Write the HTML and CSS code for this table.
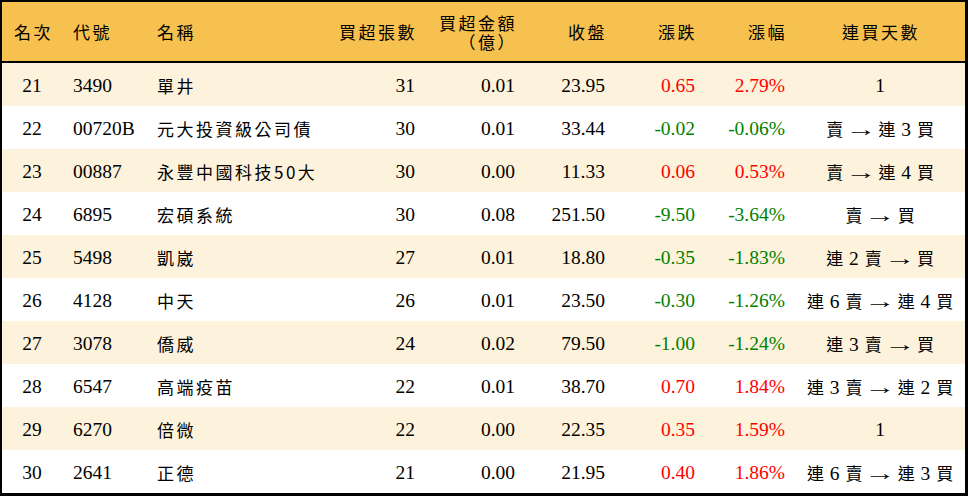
FILE: index.html
```html
<!DOCTYPE html>
<html lang="zh-Hant">
<head>
<meta charset="utf-8">
<title>買超排行</title>
<link rel="stylesheet" href="styles.css">
</head>
<body>
<div class="frame">
<table class="rank">
<colgroup>
<col class="w-rank"><col class="w-code"><col class="w-name"><col class="w-qty"><col class="w-amt"><col class="w-close"><col class="w-chg"><col class="w-pct"><col class="w-streak">
</colgroup>
<thead>
<tr>
<th class="c-rank">名次</th>
<th class="c-code">代號</th>
<th class="c-name">名稱</th>
<th class="c-num">買超張數</th>
<th class="c-num two"><span class="ln">買超金額</span><span class="ln">（億）</span></th>
<th class="c-num">收盤</th>
<th class="c-num">漲跌</th>
<th class="c-num">漲幅</th>
<th class="c-streak">連買天數</th>
</tr>
</thead>
<tbody>
<tr class="alt"><td class="c-rank">21</td><td class="c-code">3490</td><td class="c-name">單井</td><td class="c-num">31</td><td class="c-num">0.01</td><td class="c-num">23.95</td><td class="c-num up">0.65</td><td class="c-num up">2.79%</td><td class="c-streak">1</td></tr>
<tr><td class="c-rank">22</td><td class="c-code">00720B</td><td class="c-name">元大投資級公司債</td><td class="c-num">30</td><td class="c-num">0.01</td><td class="c-num">33.44</td><td class="c-num down">-0.02</td><td class="c-num down">-0.06%</td><td class="c-streak"><span class="zh">賣</span> <span class="arr">→</span> <span class="zh">連</span> 3 <span class="zh">買</span></td></tr>
<tr class="alt"><td class="c-rank">23</td><td class="c-code">00887</td><td class="c-name">永豐中國科技50大</td><td class="c-num">30</td><td class="c-num">0.00</td><td class="c-num">11.33</td><td class="c-num up">0.06</td><td class="c-num up">0.53%</td><td class="c-streak"><span class="zh">賣</span> <span class="arr">→</span> <span class="zh">連</span> 4 <span class="zh">買</span></td></tr>
<tr><td class="c-rank">24</td><td class="c-code">6895</td><td class="c-name">宏碩系統</td><td class="c-num">30</td><td class="c-num">0.08</td><td class="c-num">251.50</td><td class="c-num down">-9.50</td><td class="c-num down">-3.64%</td><td class="c-streak"><span class="zh">賣</span> <span class="arr">→</span> <span class="zh">買</span></td></tr>
<tr class="alt"><td class="c-rank">25</td><td class="c-code">5498</td><td class="c-name">凱崴</td><td class="c-num">27</td><td class="c-num">0.01</td><td class="c-num">18.80</td><td class="c-num down">-0.35</td><td class="c-num down">-1.83%</td><td class="c-streak"><span class="zh">連</span> 2 <span class="zh">賣</span> <span class="arr">→</span> <span class="zh">買</span></td></tr>
<tr><td class="c-rank">26</td><td class="c-code">4128</td><td class="c-name">中天</td><td class="c-num">26</td><td class="c-num">0.01</td><td class="c-num">23.50</td><td class="c-num down">-0.30</td><td class="c-num down">-1.26%</td><td class="c-streak"><span class="zh">連</span> 6 <span class="zh">賣</span> <span class="arr">→</span> <span class="zh">連</span> 4 <span class="zh">買</span></td></tr>
<tr class="alt"><td class="c-rank">27</td><td class="c-code">3078</td><td class="c-name">僑威</td><td class="c-num">24</td><td class="c-num">0.02</td><td class="c-num">79.50</td><td class="c-num down">-1.00</td><td class="c-num down">-1.24%</td><td class="c-streak"><span class="zh">連</span> 3 <span class="zh">賣</span> <span class="arr">→</span> <span class="zh">買</span></td></tr>
<tr><td class="c-rank">28</td><td class="c-code">6547</td><td class="c-name">高端疫苗</td><td class="c-num">22</td><td class="c-num">0.01</td><td class="c-num">38.70</td><td class="c-num up">0.70</td><td class="c-num up">1.84%</td><td class="c-streak"><span class="zh">連</span> 3 <span class="zh">賣</span> <span class="arr">→</span> <span class="zh">連</span> 2 <span class="zh">買</span></td></tr>
<tr class="alt"><td class="c-rank">29</td><td class="c-code">6270</td><td class="c-name">倍微</td><td class="c-num">22</td><td class="c-num">0.00</td><td class="c-num">22.35</td><td class="c-num up">0.35</td><td class="c-num up">1.59%</td><td class="c-streak">1</td></tr>
<tr><td class="c-rank">30</td><td class="c-code">2641</td><td class="c-name">正德</td><td class="c-num">21</td><td class="c-num">0.00</td><td class="c-num">21.95</td><td class="c-num up">0.40</td><td class="c-num up">1.86%</td><td class="c-streak"><span class="zh">連</span> 6 <span class="zh">賣</span> <span class="arr">→</span> <span class="zh">連</span> 3 <span class="zh">買</span></td></tr>
</tbody>
</table>
</div>
</body>
</html>
```
FILE: styles.css
```css
html, body {
  margin: 0;
  padding: 0;
  background: #ffffff;
}

.frame {
  width: 968px;
  box-sizing: border-box;
  border-style: solid;
  border-color: #000;
  border-width: 2px 3px 3px 2px;
}

.rank {
  width: 963px;
  table-layout: fixed;
  border-collapse: separate;
  border-spacing: 0;
  font-family: "Liberation Serif", "Noto Sans CJK TC", serif;
  font-size: 19.5px;
  color: #000;
}

.w-rank { width: 60px; }
.w-code { width: 88px; }
.w-name { width: 180px; }
.w-qty { width: 100px; }
.w-amt { width: 100px; }
.w-close { width: 90px; }
.w-chg { width: 90px; }
.w-pct { width: 90px; }
.w-streak { width: 165px; }

.rank thead tr {
  height: 61px;
}

.rank th {
  background: #f7c150;
  border-bottom: 2px solid #000;
  padding: 0;
  font-family: "Noto Sans CJK TC", sans-serif;
  font-size: 17px;
  font-weight: 400;
  letter-spacing: 2.5px;
  line-height: 22px;
  vertical-align: middle;
  white-space: nowrap;
}

.rank th.two {
  padding-top: 1px;
}

.ln {
  display: block;
  height: 19px;
  line-height: 19px;
}

.rank tbody tr {
  height: 43px;
}

.rank tbody tr.alt td {
  background: #fdf3dc;
}

.rank td {
  padding: 3px 0 0 0;
  vertical-align: middle;
  white-space: nowrap;
  line-height: 22px;
}

.c-rank {
  text-align: center;
}

.rank th.c-rank {
  padding-left: 3px;
}

.c-code {
  text-align: left;
  padding-left: 11px !important;
}

.c-name {
  text-align: left;
  padding-left: 7px !important;
}

.rank td.c-name {
  font-family: "Noto Sans CJK TC", sans-serif;
  font-size: 17px;
  letter-spacing: 2.5px;
}

.c-num {
  text-align: right;
}

.rank td.c-num {
  padding-right: 15px;
}

.rank th.c-num {
  padding-right: 13px;
}

.c-streak {
  text-align: center;
}

.rank td.c-streak {
  padding-right: 5px;
}

.rank th.c-streak {
  padding-right: 3px;
}

.zh {
  font-family: "Noto Sans CJK TC", sans-serif;
  font-size: 17px;
  margin: 0 1px;
}

.arr {
  display: inline-block;
  font-family: "Liberation Serif", serif;
  transform: scaleX(1.6);
  margin: 0 2px;
}

.up {
  color: #ff0000;
}

.down {
  color: #008000;
}
```
